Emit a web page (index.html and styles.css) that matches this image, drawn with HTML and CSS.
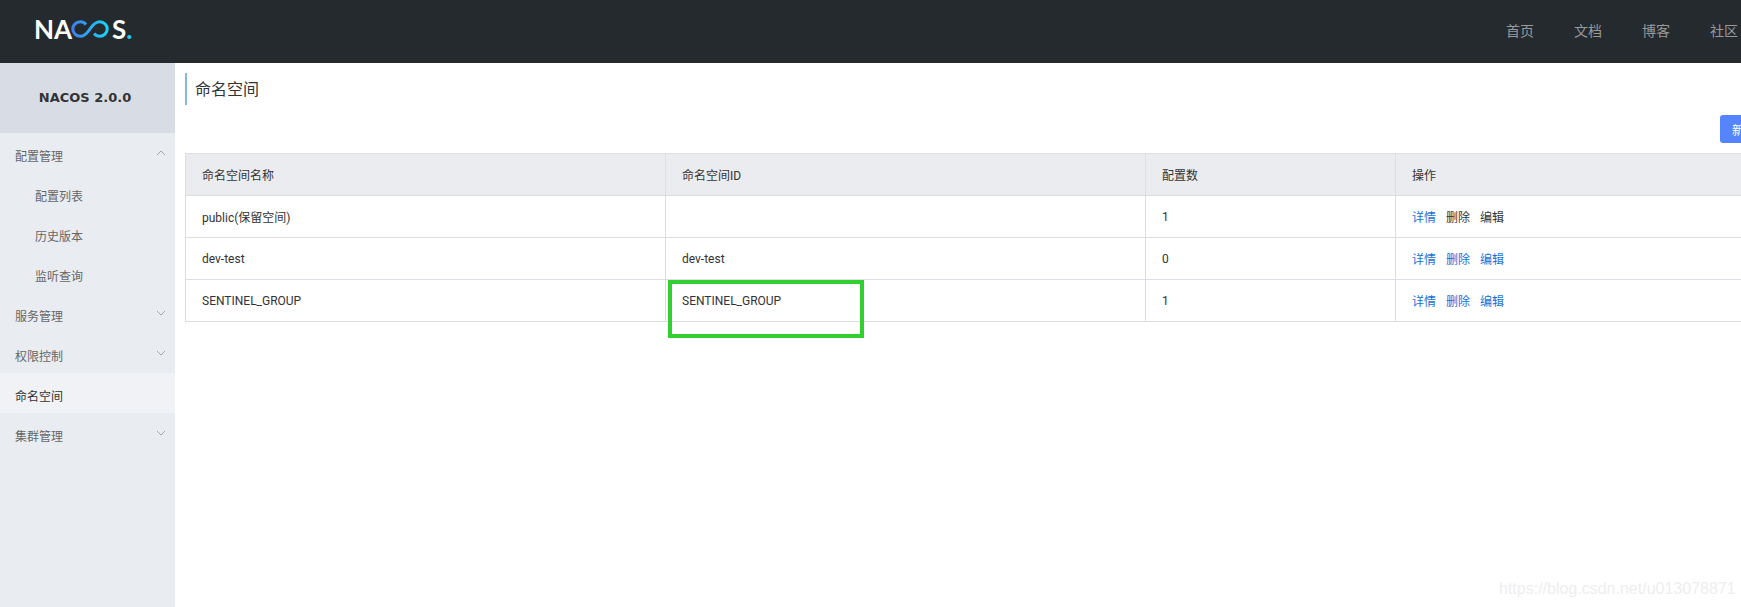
FILE: index.html
```html
<!DOCTYPE html>
<html>
<head>
  <title>Nacos</title>
  <meta charset="UTF-8"/>
  <link rel="stylesheet" href="styles.css">
</head>
<body>

  <header class="top-bar">
    <div class="logo">
      <span class="logo-text">NA</span>
      <svg class="logo-loop" width="38" height="18" viewBox="0 0 38 18">
        <defs>
          <linearGradient id="loop-fill" x1="0" y1="0" x2="1" y2="0">
            <stop offset="0" stop-color="#3b82ee"/>
            <stop offset="1" stop-color="#19d3f7"/>
          </linearGradient>
        </defs>
        <path d="M15 4.5C13.5 2.8 11.500 1.800 9.300 1.800C5.200 1.800 1.800 5 1.800 9C1.800 13 5.200 16.200 9.300 16.200C14.500 16.200 17 11.500 19 9C21 6.500 23.500 1.800 28.700 1.800C32.800 1.800 36.200 5 36.200 9C36.200 13 32.800 16.200 28.700 16.200C26.500 16.200 24.500 15.200 23 13.500" fill="none" stroke="url(#loop-fill)" stroke-width="3"/>
      </svg>
      <span class="logo-text">S</span><span class="logo-dot">.</span>
    </div>
    <nav class="top-nav">
      <a>首页</a>
      <a>文档</a>
      <a>博客</a>
      <a>社区</a>
    </nav>
  </header>

  <div class="page">
    <aside class="side-menu">
      <div class="side-title">NACOS 2.0.0</div>
      <div class="menu-item"><span>配置管理</span>
        <svg class="chevron" width="10" height="6" viewBox="0 0 10 6"><path d="M1 5L5 1L9 5" fill="none" stroke="#a3a6ab"/></svg>
      </div>
      <div class="menu-item sub"><span>配置列表</span></div>
      <div class="menu-item sub"><span>历史版本</span></div>
      <div class="menu-item sub"><span>监听查询</span></div>
      <div class="menu-item"><span>服务管理</span>
        <svg class="chevron" width="10" height="6" viewBox="0 0 10 6"><path d="M1 1L5 5L9 1" fill="none" stroke="#a3a6ab"/></svg>
      </div>
      <div class="menu-item"><span>权限控制</span>
        <svg class="chevron" width="10" height="6" viewBox="0 0 10 6"><path d="M1 1L5 5L9 1" fill="none" stroke="#a3a6ab"/></svg>
      </div>
      <div class="menu-item active"><span>命名空间</span></div>
      <div class="menu-item"><span>集群管理</span>
        <svg class="chevron" width="10" height="6" viewBox="0 0 10 6"><path d="M1 1L5 5L9 1" fill="none" stroke="#a3a6ab"/></svg>
      </div>
    </aside>

    <main class="content">
      <h1 class="page-title">命名空间</h1>
      <div class="toolbar">
        <button class="primary-button">新建命名空间</button>
      </div>
      <table class="ns-table">
        <colgroup>
          <col class="col-name">
          <col class="col-id">
          <col class="col-count">
          <col>
        </colgroup>
        <thead>
          <tr>
            <th>命名空间名称</th>
            <th>命名空间ID</th>
            <th>配置数</th>
            <th>操作</th>
          </tr>
        </thead>
        <tbody>
          <tr>
            <td>public(保留空间)</td>
            <td></td>
            <td>1</td>
            <td><a class="link">详情</a><a>删除</a><a>编辑</a></td>
          </tr>
          <tr>
            <td>dev-test</td>
            <td>dev-test</td>
            <td>0</td>
            <td><a class="link">详情</a><a class="link">删除</a><a class="link">编辑</a></td>
          </tr>
          <tr>
            <td>SENTINEL_GROUP</td>
            <td>SENTINEL_GROUP</td>
            <td>1</td>
            <td><a class="link">详情</a><a class="link">删除</a><a class="link">编辑</a></td>
          </tr>
        </tbody>
      </table>
    </main>
  </div>

  <div class="green-box"></div>
  <div class="watermark">https://blog.csdn.net/u013078871</div>

</body>
</html>
```

FILE: styles.css
```css
html, body {
  margin: 0;
  height: 100%;
}

body {
  position: relative;
  overflow: hidden;
  background-color: white;
  font-family: "Roboto", "Noto Sans CJK SC", sans-serif;
  font-size: 12px;
  color: #333;
}

.top-bar {
  display: flex;
  justify-content: space-between;
  align-items: center;
  height: 63px;
  padding: 0 3px 0 34px;
  background-color: #252a2f;
}

.logo {
  display: flex;
  align-items: center;
  height: 18px;
  margin-top: -5px;
}

.logo-text {
  font-family: "Lato", sans-serif;
  font-size: 26px;
  font-weight: 700;
  line-height: 18px;
  color: white;
}

.logo-loop {
  margin: 0 3px 0 -1px;
}

.logo-dot {
  font-family: "Lato", sans-serif;
  font-size: 26px;
  font-weight: 700;
  line-height: 18px;
  color: #19d3f7;
}

.top-nav {
  display: flex;
  gap: 40px;
  font-family: "Noto Sans CJK SC", sans-serif;
  font-size: 14px;
  color: #999;
  margin-top: -3px;
}

.page {
  display: flex;
  height: 544px;
}

.side-menu {
  flex: none;
  width: 175px;
  background-color: #e9ecf1;
  color: #666;
}

.side-title {
  height: 70px;
  line-height: 70px;
  padding-right: 5px;
  text-align: center;
  font-family: "DejaVu Sans", sans-serif;
  font-size: 13px;
  font-weight: bold;
  color: #333;
  background-color: #d8dde5;
}

.menu-item {
  display: flex;
  justify-content: space-between;
  align-items: center;
  height: 40px;
  padding: 0 9px 0 15px;
  font-family: "Noto Sans CJK SC", sans-serif;
}

.menu-item span {
  padding-top: 4px;
}

.menu-item.sub {
  padding-left: 35px;
}

.menu-item.active {
  background-color: #f0f2f6;
  color: #333;
}

.content {
  flex: none;
  width: 1631px;
  padding-left: 10px;
}

.page-title {
  margin: 10px 0 0;
  height: 32px;
  line-height: 31px;
  padding-left: 8px;
  border-left: 2px solid #88b7e0;
  font-family: "Noto Sans CJK SC", sans-serif;
  font-size: 16px;
  font-weight: normal;
}

.toolbar {
  display: flex;
  justify-content: flex-end;
  margin-top: 10px;
}

.primary-button {
  width: 96px;
  height: 28px;
  padding: 0;
  border: none;
  border-radius: 3px;
  background-color: #5584ff;
  color: white;
  font-family: "Noto Sans CJK SC", sans-serif;
  font-size: 12px;
}

.ns-table {
  table-layout: fixed;
  width: 100%;
  margin-top: 10px;
  border-collapse: collapse;
}

.col-name,
.col-id {
  width: 480px;
}

.col-count {
  width: 250px;
}

.ns-table th,
.ns-table td {
  height: 41px;
  padding: 0 16px;
  border: 1px solid #dcdee3;
  font-weight: normal;
  text-align: left;
}

.ns-table th {
  background-color: #ebecf0;
}

.ns-table a {
  margin-right: 10px;
}

.ns-table a.link {
  color: #1a6fd8;
}

.green-box {
  position: absolute;
  left: 668px;
  top: 280px;
  width: 188px;
  height: 50px;
  border: 4px solid #2fd02f;
}

.watermark {
  position: absolute;
  left: 1499px;
  top: 580px;
  font-family: "Liberation Sans", sans-serif;
  font-size: 16px;
  color: #eeeeee;
}
```
